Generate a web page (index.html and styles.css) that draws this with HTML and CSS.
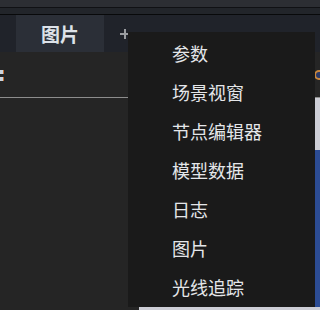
FILE: index.html
```html
<!DOCTYPE html>
<html lang="zh">
<head>
<meta charset="utf-8">
<title>Tabs</title>
<link rel="stylesheet" href="styles.css">
</head>
<body>
<div class="app">
  <div class="titlebar"></div>
  <div class="sep"></div>
  <div class="toolstrip"></div>
  <div class="sep dark"></div>
  <div class="tabbar">
    <div class="tab active">图片</div>
    <div class="add" aria-label="add"></div>
  </div>
  <div class="content">
    <div class="header">
      <div class="colon"><span></span><span></span></div>
      <div class="knob"></div>
    </div>
    <div class="rule"></div>
    <div class="body">
      <div class="preview">
        <div class="blue"></div>
      </div>
    </div>
  </div>
  <ul class="menu">
    <li>参数</li>
    <li>场景视窗</li>
    <li>节点编辑器</li>
    <li>模型数据</li>
    <li>日志</li>
    <li>图片</li>
    <li>光线追踪</li>
  </ul>
</div>
</body>
</html>
```
FILE: styles.css
```css
* { box-sizing: border-box; }
html, body { margin: 0; padding: 0; }
body {
  width: 320px;
  height: 310px;
  overflow: hidden;
  background: #252525;
  font-family: "Noto Sans CJK SC", "Noto Sans", sans-serif;
}
.app {
  position: relative;
  width: 320px;
  height: 310px;
  display: flex;
  flex-direction: column;
}
.titlebar { height: 7px; background: #2c2e33; }
.sep { height: 1px; background: #101114; }
.sep.dark { background: #08090a; }
.toolstrip { height: 6px; background: #22252a; }
.tabbar {
  height: 37px;
  background: #20232a;
  display: flex;
  align-items: center;
  padding-left: 16px;
}
.tab {
  width: 88px;
  align-self: stretch;
  display: flex;
  align-items: center;
  justify-content: center;
  font-size: 19px;
  font-weight: 700;
  color: #dde2e8;
}
.tab.active { background: #2b2f37; }
.add {
  position: relative;
  margin-left: 16px;
  margin-top: 1px;
  width: 9px;
  height: 10px;
}
.add::before,
.add::after {
  content: "";
  position: absolute;
  background: #9a9ca0;
}
.add::before { left: 0; right: 0; top: 4px; height: 2px; }
.add::after { top: 0; bottom: 0; left: 4px; width: 2px; }
.content {
  flex: 1;
  display: flex;
  flex-direction: column;
  background: #252525;
}
.header {
  height: 45px;
  display: flex;
  align-items: center;
  justify-content: space-between;
}
.colon {
  display: flex;
  flex-direction: column;
  gap: 3px;
  margin-top: 1px;
}
.colon span {
  width: 4px;
  height: 4px;
  background: #c9d3dd;
  border-right: 1px solid #c46a2a;
}
.knob {
  width: 10px;
  height: 10px;
  border-radius: 50%;
  background: #2a3a6a;
  border: 2px solid #c8873e;
  margin-right: -4px;
  margin-top: 1px;
}
.rule { height: 1px; background: #8d8d8d; }
.body {
  flex: 1;
  display: flex;
  justify-content: flex-end;
}
.preview {
  width: 181px;
  background: #cdced6;
  padding-top: 52px;
  padding-bottom: 3px;
  display: flex;
  flex-direction: column;
}
.blue { flex: 1; background: #2c4c94; }
.menu {
  position: absolute;
  left: 128px;
  top: 32px;
  width: 187px;
  height: 275px;
  margin: 0;
  padding: 2px 0 0 44px;
  list-style: none;
  background: #1a1a1a;
}
.menu li {
  height: 39px;
  line-height: 39px;
  font-size: 18px;
  color: #e4e6e9;
  white-space: nowrap;
}
```
